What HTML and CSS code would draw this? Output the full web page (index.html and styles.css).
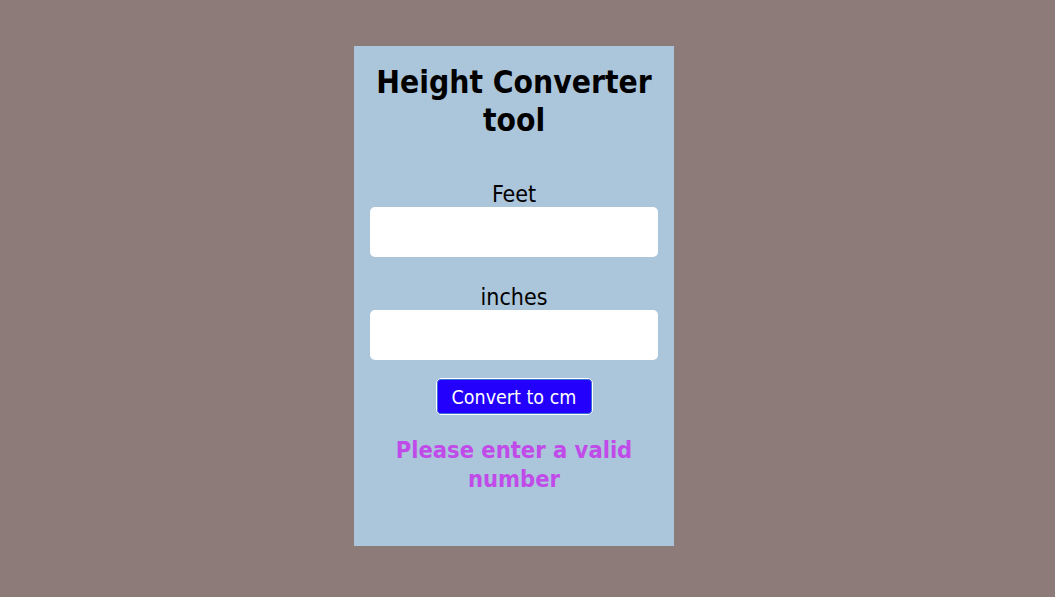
FILE: index.html
```html
<!DOCTYPE html>
<html>
<head>
<meta charset="utf-8">
<link rel="stylesheet" href="styles.css">
</head>
<body>
<div class="card">
  <h1 class="title">Height Converter tool</h1>
  <label class="label" for="feet">Feet</label>
  <input class="field" id="feet" type="text">
  <label class="label label-second" for="inches">inches</label>
  <input class="field" id="inches" type="text">
  <button class="btn">Convert to cm</button>
  <p class="error">Please enter a valid number</p>
</div>
</body>
</html>
```

FILE: styles.css
```css
html, body {
  margin: 0;
  padding: 0;
}
body {
  background: #8d7b7a;
  font-family: "DejaVu Sans Condensed", "DejaVu Sans", sans-serif;
  display: flex;
  justify-content: center;
  padding: 46px 27px 0 0;
  height: 597px;
  box-sizing: border-box;
}
.card {
  width: 320px;
  height: 500px;
  box-sizing: border-box;
  background: #abc5db;
  padding: 0 16px;
  display: flex;
  flex-direction: column;
  align-items: center;
}
.title {
  font-size: 31.5px;
  font-weight: bold;
  line-height: 38px;
  text-align: center;
  margin: 17px 0 0;
  color: #000;
}
.label {
  font-size: 23px;
  line-height: 26px;
  margin-top: 42px;
  margin-bottom: 0;
  color: #000;
}
.label-second {
  margin-top: 27px;
}
.field {
  width: 100%;
  height: 50px;
  box-sizing: border-box;
  border: none;
  border-radius: 5px;
  background: #fff;
}
.btn {
  margin-top: 18px;
  width: 157px;
  height: 37px;
  box-sizing: border-box;
  background: #2200fb;
  color: #fff;
  border: 1px solid #fff;
  box-shadow: inset 0 0 0 1px #3a6fd8;
  border-radius: 5px;
  font-family: inherit;
  font-size: 19.5px;
  padding: 2px 0 0;
}
.error {
  margin: 21px 0 0;
  font-size: 23.5px;
  line-height: 29px;
  font-weight: bold;
  color: #c04be9;
  text-align: center;
}
```
